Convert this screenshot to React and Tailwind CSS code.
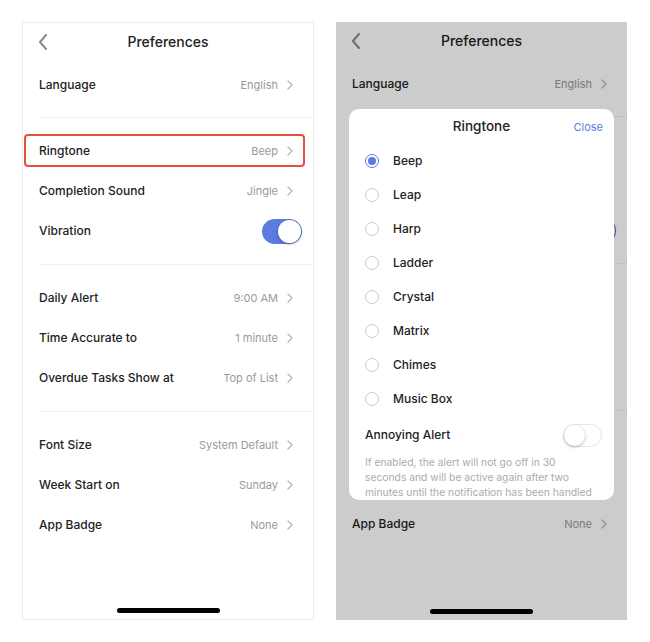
import React from "react";

const font = { fontFamily: "Inter, 'Noto Sans', 'Liberation Sans', sans-serif" };

function Chevron() {
  return (
    <svg width="6" height="10" viewBox="0 0 6 10" className="shrink-0">
      <polyline points="1,1 5,5 1,9" fill="none" stroke="#b5b5b5" strokeWidth="1.3" strokeLinecap="round" strokeLinejoin="round" />
    </svg>
  );
}

function Row({ label, value, highlight, hidden }) {
  return (
    <div className="relative flex h-[40px] items-center justify-between pl-4 pr-[20px]">
      <span className={"text-[12px] font-medium text-[#222] " + (hidden ? "invisible" : "")}>{label}</span>
      <div className={"flex items-center gap-[9px] " + (hidden ? "invisible" : "")}>
        <span className="text-[11px] text-[#9a9a9a]">{value}</span>
        <Chevron />
      </div>
      {highlight && (
        <div className="absolute left-[1px] right-[8px] top-[3px] bottom-[4px] rounded-[4px] border-[2.5px] border-[#e4513c]" />
      )}
    </div>
  );
}

function ToggleRow({ label, hidden }) {
  return (
    <div className="flex h-[40px] items-center justify-between pl-4 pr-[11px]">
      <span className={"text-[12px] font-medium text-[#222] " + (hidden ? "invisible" : "")}>{label}</span>
      <div className="flex h-[25px] w-[40px] items-center justify-end rounded-full bg-[#5b7be1] pr-[1px]">
        <div className="h-[23px] w-[23px] rounded-full bg-white shadow-[0_1px_3px_rgba(0,0,0,0.3)]" />
      </div>
    </div>
  );
}

function Divider() {
  return <div className="ml-4 h-px bg-[#f0f0f0]" />;
}

function Page({ bordered, covered, children }) {
  return (
    <div
      className={
        "relative flex h-[598px] flex-col overflow-hidden bg-white " +
        (bordered ? "w-[292px] border border-[#ececec]" : "w-[291px]")
      }
    >
      <div className="relative flex h-[36px] items-center justify-center">
        <svg width="10" height="16" viewBox="0 0 10 16" className="absolute left-[15px] top-[11px]">
          <polyline points="8,1 2,8 8,15" fill="none" stroke="#8a8a8a" strokeWidth="2" strokeLinecap="round" strokeLinejoin="round" />
        </svg>
        <span className="text-[14px] font-medium text-[#222]">Preferences</span>
      </div>
      <div className="pt-[6px] pb-[12px]">
        <Row label="Language" value="English" />
      </div>
      <Divider />
      <div className="py-[13px]">
        <Row label="Ringtone" value="Beep" highlight={bordered} hidden={covered} />
        <Row label="Completion Sound" value="Jingle" hidden={covered} />
        <ToggleRow label="Vibration" hidden={covered} />
      </div>
      <Divider />
      <div className="py-[13px]">
        <Row label="Daily Alert" value="9:00 AM" hidden={covered} />
        <Row label="Time Accurate to" value="1 minute" hidden={covered} />
        <Row label="Overdue Tasks Show at" value="Top of List" hidden={covered} />
      </div>
      <Divider />
      <div className="pt-[13px]">
        <Row label="Font Size" value="System Default" hidden={covered} />
        <Row label="Week Start on" value="Sunday" hidden={covered} />
        <Row label="App Badge" value="None" />
      </div>
      <div className="flex-1" />
      <div className="flex justify-center pb-[6px]">
        <div className="h-[5px] w-[103px] rounded-full bg-black" />
      </div>
      {children}
    </div>
  );
}

function Radio({ selected }) {
  if (selected) {
    return (
      <div className="flex h-[14px] w-[14px] items-center justify-center rounded-full border-[1.5px] border-[#5b7be1]">
        <div className="h-[8px] w-[8px] rounded-full bg-[#5b7be1]" />
      </div>
    );
  }
  return <div className="h-[14px] w-[14px] rounded-full border border-[#c9c9c9]" />;
}

const tones = ["Beep", "Leap", "Harp", "Ladder", "Crystal", "Matrix", "Chimes", "Music Box"];

function Modal() {
  return (
    <>
      <div className="absolute inset-0 bg-black/20" />
      <div className="absolute left-[13px] right-[13px] top-[87px] h-[391px] overflow-hidden rounded-[10px] bg-white">
        <div className="relative flex h-[35px] items-center justify-center">
          <span className="text-[13.5px] font-medium text-[#222]">Ringtone</span>
          <div className="absolute inset-y-0 right-[11px] flex items-center pt-[1px]">
            <span className="text-[11px] text-[#5b7be1]">Close</span>
          </div>
        </div>
        <div>
          {tones.map((t, i) => (
            <div key={t} className="flex h-[34px] items-center gap-[14px] pl-[16px]">
              <Radio selected={i === 0} />
              <span className="text-[12px] font-medium text-[#222]">{t}</span>
            </div>
          ))}
        </div>
        <div className="flex h-[38px] items-center justify-between pl-[16px] pr-[12px]">
          <span className="text-[12px] font-medium text-[#222]">Annoying Alert</span>
          <div className="flex h-[23px] w-[39px] items-center rounded-full border border-[#e6e6e6] bg-white">
            <div className="h-[21px] w-[21px] rounded-full bg-white shadow-[0_1px_3px_rgba(0,0,0,0.3)]" />
          </div>
        </div>
        <div className="whitespace-nowrap px-[16px] pt-[1px] text-[10.3px] leading-[15px] text-[#ababab]">
          If enabled, the alert will not go off in 30
          <br />
          seconds and will be active again after two
          <br />
          minutes until the notification has been handled
        </div>
      </div>
    </>
  );
}

export default function App() {
  return (
    <div style={font} className="flex h-[642px] w-[650px] gap-[22px] bg-white pl-[22px] pt-[22px]">
      <Page bordered />
      <Page covered>
        <Modal />
      </Page>
    </div>
  );
}
